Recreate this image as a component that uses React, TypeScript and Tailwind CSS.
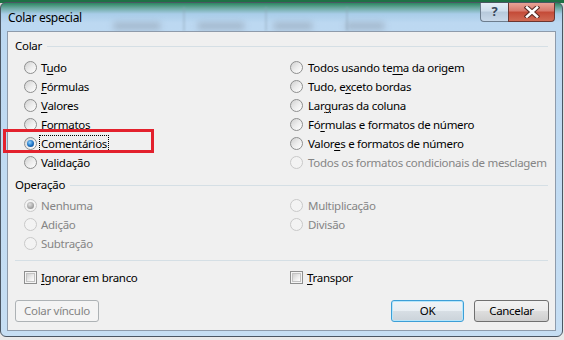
import type { ReactNode } from "react";

const font = { fontFamily: '"Noto Sans", "Segoe UI", sans-serif' };

function Radio({ checked, disabled }: { checked?: boolean; disabled?: boolean }) {
  return (
    <span
      className={`flex h-[13px] w-[13px] shrink-0 items-center justify-center rounded-full border ${
        disabled
          ? "border-[#c9c9c9] bg-[#f3f3f3]"
          : "border-[#8e8f8f] bg-[linear-gradient(135deg,#cfcfcf_0%,#ececec_50%,#ffffff_100%)]"
      }`}
    >
      {checked && (
        <span
          className={`h-[7px] w-[7px] rounded-full ${
            disabled
              ? "bg-[radial-gradient(circle_at_40%_35%,#e0e0e0_0%,#9a9a9a_70%)]"
              : "bg-[radial-gradient(circle_at_40%_35%,#8fd3ff_0%,#1a6fc2_55%,#0b3f7a_100%)]"
          }`}
        />
      )}
    </span>
  );
}

function Check() {
  return (
    <span className="flex h-[13px] w-[13px] shrink-0 items-center justify-center border border-[#8e8f8f] bg-[#f4f4f4]">
      <span className="h-[9px] w-[9px] border border-[#c3c3c3] bg-[linear-gradient(135deg,#d0d0d0_0%,#ececec_55%,#ffffff_100%)]" />
    </span>
  );
}

function Option({
  children,
  checked,
  disabled,
  focused,
  gap = "gap-[4px]",
}: {
  children: ReactNode;
  checked?: boolean;
  disabled?: boolean;
  focused?: boolean;
  gap?: string;
}) {
  return (
    <div className={`flex h-[19px] items-center ${gap}`}>
      <Radio checked={checked} disabled={disabled} />
      <span
        className={`whitespace-nowrap leading-[15px] ${
          disabled ? "text-[#858585]" : "text-black"
        } ${focused ? "outline-1 outline-dotted outline-black px-px -ml-px" : ""}`}
      >
        {children}
      </span>
    </div>
  );
}

function Heading({ label }: { label: string }) {
  return (
    <div className="flex h-[16px] items-center gap-[5px]">
      <span className="leading-[16px] text-black">{label}</span>
      <span className="h-px flex-1 bg-[#d5dfe5]" />
    </div>
  );
}

const u = (c: string) => <span className="underline underline-offset-[2px]">{c}</span>;

function CloseGlyph() {
  return (
    <svg width="16" height="12" viewBox="0 0 16 12">
      <path d="M3 1.5 L13 10.5 M13 1.5 L3 10.5" stroke="#5a2b24" strokeWidth="4.6" strokeLinecap="square" />
      <path d="M3 1.5 L13 10.5 M13 1.5 L3 10.5" stroke="#ffffff" strokeWidth="2.6" strokeLinecap="square" />
    </svg>
  );
}

export default function App() {
  return (
    <div
      className="h-[340px] w-[564px] overflow-hidden bg-[linear-gradient(180deg,#1e7145_0px,#1e7145_3px,#d8d8d8_3px,#e9e9e9_100%)] pt-[2px] text-[11.5px] tracking-[-0.3px]"
      style={font}
    >
      <div className="relative flex h-[335px] w-[563px] flex-col rounded-[6px] border border-[#4b5663] bg-[linear-gradient(180deg,#2c8660_0px,#6aa9a0_5px,#a9cde9_11px,#bcd8f1_20px,#c6def3_100%)] px-[6px] pb-[5px]">
        {/* blurred cells behind glass */}
        <span className="absolute left-[112px] top-[19px] h-[8px] w-[48px] rounded-full bg-[#8d9bab] opacity-50 blur-[3px]" />
        <span className="absolute left-[196px] top-[19px] h-[8px] w-[48px] rounded-full bg-[#8d9bab] opacity-50 blur-[3px]" />
        <span className="absolute left-[272px] top-[19px] h-[8px] w-[40px] rounded-full bg-[#8d9bab] opacity-50 blur-[3px]" />
        <span className="absolute left-[344px] top-[19px] h-[8px] w-[40px] rounded-full bg-[#8d9bab] opacity-50 blur-[3px]" />
        <span className="absolute left-[182px] top-[4px] h-[24px] w-[2px] bg-[#8fa6b8] opacity-40 blur-[1px]" />
        <span className="absolute left-[264px] top-[4px] h-[24px] w-[2px] bg-[#8fa6b8] opacity-40 blur-[1px]" />
        <span className="absolute left-[345px] top-[4px] h-[24px] w-[2px] bg-[#8fa6b8] opacity-40 blur-[1px]" />

        {/* title bar */}
        <div className="relative flex h-[28px] items-start">
          <span className="mt-[7px] pl-px text-[12px] leading-[16px] text-black">Colar especial</span>
          <div className="ml-auto mr-[1px] flex">
            <div className="flex h-[19px] w-[28px] items-center justify-center rounded-bl-[4px] border border-r-0 border-t-0 border-[#6d7d8e] bg-[linear-gradient(180deg,#e4edf6_0%,#cfdeed_45%,#b7c9db_50%,#c9d9ea_100%)] font-bold text-[13px] text-[#38475a]">
              ?
            </div>
            <div className="flex h-[19px] w-[47px] items-center justify-center rounded-br-[4px] border border-t-0 border-[#6b3530] bg-[linear-gradient(180deg,#e9a397_0%,#d7786a_45%,#c44a37_50%,#d06b55_100%)]">
              <CloseGlyph />
            </div>
          </div>
        </div>

        {/* content panel */}
        <div className="relative flex flex-1 flex-col border border-[#8e9bab] bg-[#f0f0f0] px-[7px]">
          <div className="mt-[6px]">
            <Heading label="Colar" />
          </div>
          <div className="mt-[4px] grid grid-cols-[266px_1fr] pl-[9px]">
            <div className="flex flex-col">
              <Option>T{u("u")}do</Option>
              <Option>{u("F")}órmulas</Option>
              <Option>{u("V")}alores</Option>
              <Option>Formatos</Option>
              <Option checked focused>
                {u("C")}omentários
              </Option>
              <Option>Va{u("l")}idação</Option>
            </div>
            <div className="flex flex-col">
              <Option gap="gap-[5px]">Todos usando te{u("m")}a da origem</Option>
              <Option gap="gap-[5px]">Tudo, e{u("x")}ceto bordas</Option>
              <Option gap="gap-[5px]">Lar{u("g")}uras da coluna</Option>
              <Option gap="gap-[5px]">Fó{u("r")}mulas e formatos de número</Option>
              <Option gap="gap-[5px]">Valor{u("e")}s e formatos de número</Option>
              <Option gap="gap-[5px]" disabled>
                Todos os formatos condicionais de mesclagem
              </Option>
            </div>
          </div>

          <div className="mt-[5px]">
            <Heading label="Operação" />
          </div>
          <div className="mt-[3px] grid grid-cols-[266px_1fr] pl-[9px]">
            <div className="flex flex-col">
              <Option checked disabled>
                Nenhuma
              </Option>
              <Option disabled>Adição</Option>
              <Option disabled>Subtração</Option>
            </div>
            <div className="flex flex-col">
              <Option gap="gap-[5px]" disabled>
                Multiplicação
              </Option>
              <Option gap="gap-[5px]" disabled>
                Divisão
              </Option>
            </div>
          </div>

          <div className="mt-[7px] h-px bg-[#d5dfe5]" />

          <div className="mt-[7px] grid grid-cols-[266px_1fr] pl-[9px]">
            <div className="flex h-[19px] items-center gap-[4px]">
              <Check />
              <span className="text-black">{u("I")}gnorar em branco</span>
            </div>
            <div className="flex h-[19px] items-center gap-[4px]">
              <Check />
              <span className="text-black">{u("T")}ranspor</span>
            </div>
          </div>

          <div className="mt-[13px] flex items-center">
            <button
              type="button"
              className="flex h-[22px] w-[84px] items-center justify-center rounded-[3px] border border-[#adb2b5] bg-[#f4f4f4] text-[#848484]"
            >
              Colar vínculo
            </button>
            <button
              type="button"
              className="ml-auto flex h-[22px] w-[73px] items-center justify-center rounded-[3px] border border-[#3c9fd7] bg-[linear-gradient(180deg,#f0f4f7_0%,#e8eef3_48%,#d7dee4_52%,#cbd3da_100%)] text-black shadow-[inset_0_0_0_1px_#b6e6fb]"
            >
              OK
            </button>
            <button
              type="button"
              className="ml-[10px] mr-[-1px] flex h-[22px] w-[75px] items-center justify-center rounded-[3px] border border-[#707070] bg-[linear-gradient(180deg,#f2f2f2_0%,#ebebeb_48%,#dddddd_52%,#cfcfcf_100%)] text-black"
            >
              Cancelar
            </button>
          </div>

          {/* red highlight annotation */}
          <span className="pointer-events-none absolute left-[-5px] top-[97px] h-[24px] w-[151px] border-[3px] border-[#e3212d]" />
        </div>
      </div>
    </div>
  );
}
